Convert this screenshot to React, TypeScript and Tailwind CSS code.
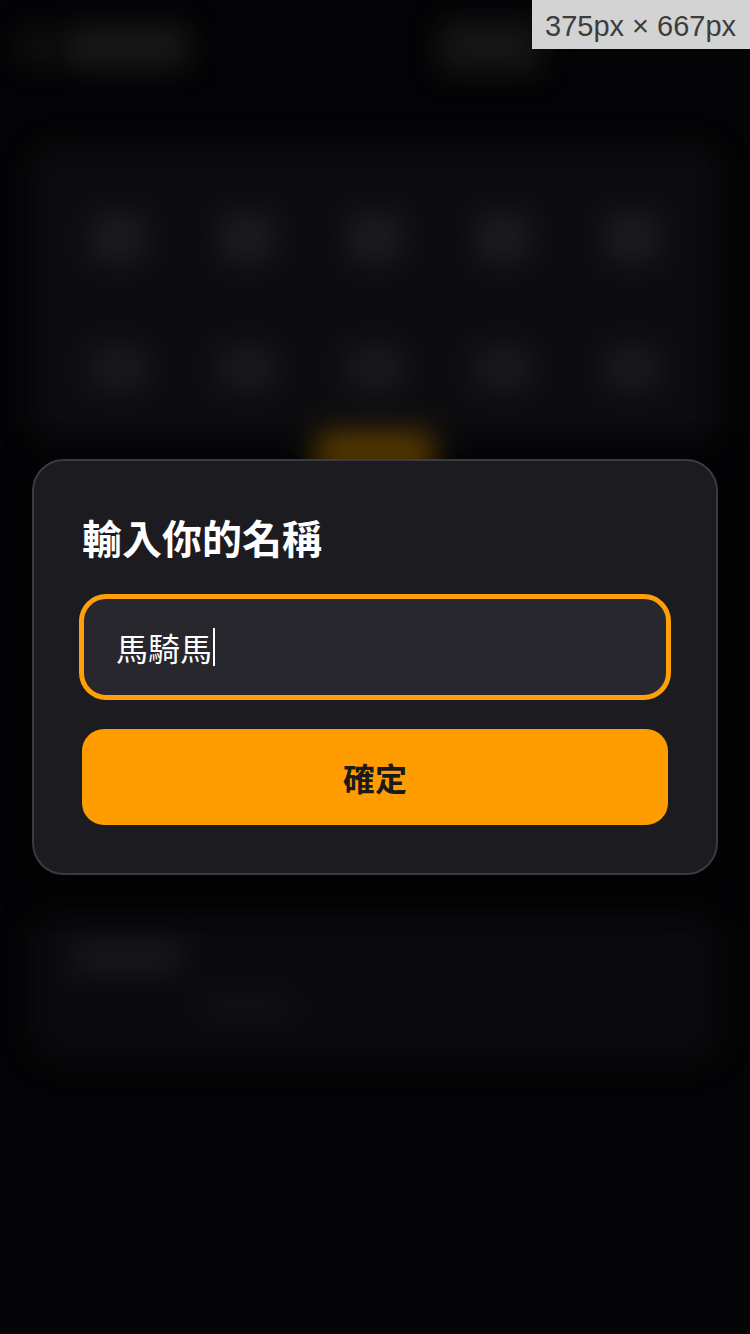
import { useState } from 'react';

const cjk = { fontFamily: '"Noto Sans CJK TC", "Noto Sans", sans-serif' };

// the page that sits behind the dialog, shown blurred and dimmed
function BlurredPage() {
  const row = [0, 1, 2, 3, 4];

  return (
    <div className="blur-[14px] pointer-events-none select-none">
      {/* Header */}
      <div className="flex items-center justify-between px-[24px] h-[94px]">
        <div className="flex items-center gap-[18px]">
          <div className="w-[22px] h-[34px] rounded-md bg-[#151517]" />
          <div className="w-[124px] h-[40px] rounded-md bg-[#19191b]" />
        </div>
        <div className="w-[100px] h-[50px] rounded-md bg-[#161618] mr-[186px]" />
      </div>

      {/* Grid card */}
      <div className="mx-[32px] mt-[52px] h-[300px] rounded-[24px] bg-[#0c0c0f] px-[32px] pt-[66px] flex flex-col gap-[80px]">
        <div className="grid grid-cols-5 gap-[20px] justify-items-center">
          {row.map((i) => (
            <div key={i} className="w-[56px] h-[52px] rounded-xl bg-[#1b1b1e]" />
          ))}
        </div>
        <div className="grid grid-cols-5 gap-[20px] justify-items-center">
          {row.map((i) => (
            <div key={i} className="w-[60px] h-[48px] rounded-xl bg-[#19191c]" />
          ))}
        </div>
      </div>

      <div className="flex justify-center -mt-[14px]">
        <div className="w-[120px] h-[60px] rounded-2xl bg-[#5a3c00]" />
      </div>

      {/* Lower card */}
      <div className="mx-[32px] mt-[420px] h-[150px] rounded-[24px] bg-[#0a0a0d] px-[40px] pt-[28px]">
        <div className="w-[110px] h-[34px] rounded-md bg-[#18181b]" />
        <div className="ml-[130px] mt-[20px] w-[90px] h-[26px] rounded-md bg-[#111114]" />
      </div>
    </div>
  );
}

export default function App() {
  const [name] = useState('馬騎馬');

  return (
    <div className="relative h-[1334px] w-[750px] overflow-hidden bg-[#040406]">
      <BlurredPage />

      {/* Viewport size badge */}
      <div
        className="absolute top-0 right-0 h-[49px] w-[218px] bg-[#d3d3d3] text-[#3d3d3d] text-[29px] leading-[52px] pl-[13px]"
        style={{ fontFamily: '"Liberation Sans", Arial, sans-serif' }}
      >
        375px × 667px
      </div>

      {/* Dialog */}
      <div className="absolute inset-x-0 top-[459px] px-[32px]">
        <div
          className="rounded-[32px] border-2 border-[#3a3a40] bg-[#1b1b20] px-[48px] py-[48px] shadow-[0_10px_40px_rgba(0,0,0,0.6)]"
          style={cjk}
        >
          <h2 className="text-[40px] leading-[56px] font-bold text-white">輸入你的名稱</h2>

          <div className="mt-[32px] h-[100px] rounded-[24px] border-2 border-[#ff9f0a] shadow-[0_0_0_3px_#ff9f0a] bg-[#27272d] px-[32px] flex items-center">
            <span className="text-[32px] text-white leading-none">{name}</span>
            <span className="ml-[1px] w-[2px] h-[38px] bg-white" />
          </div>

          <button className="mt-[32px] w-full h-[96px] rounded-[22px] bg-[#ff9d00] text-[32px] font-bold text-[#1a1a1a]">
            確定
          </button>
        </div>
      </div>
    </div>
  );
}
